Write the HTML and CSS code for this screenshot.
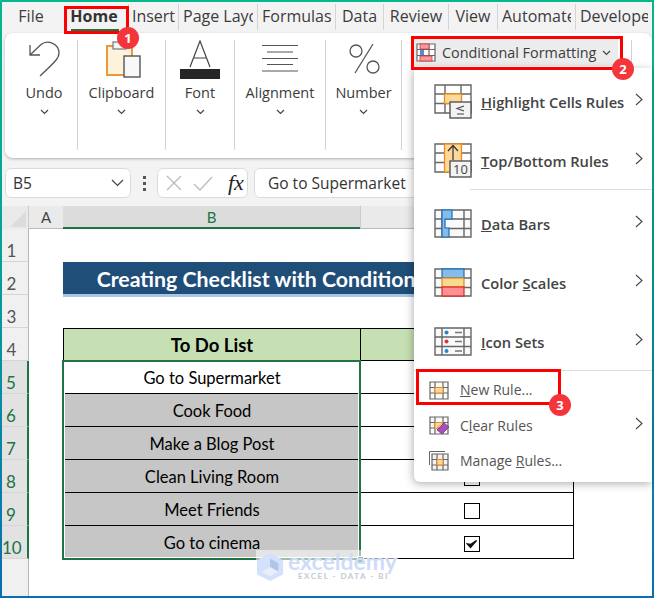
FILE: index.html
```html
<!DOCTYPE html>
<html lang="en">
<head>
<meta charset="utf-8">
<title>Conditional Formatting</title>
<link rel="stylesheet" href="styles.css">
</head>
<body>
<div class="frame">
  <div class="inner">
    <nav class="tabs">
      <div class="tab plain"><span>File</span></div>
      <div class="tab active"><span>Home</span></div>
      <div class="tab tight"><span>Insert</span></div>
      <div class="tab"><span>Page Layout</span></div>
      <div class="tab"><span>Formulas</span></div>
      <div class="tab"><span>Data</span></div>
      <div class="tab"><span>Review</span></div>
      <div class="tab"><span>View</span></div>
      <div class="tab"><span>Automate</span></div>
      <div class="tab plain"><span>Developer</span></div>
    </nav>

    <section class="ribbon">
      <div class="group undo">
        <div class="gicon"><svg width="34" height="40" viewBox="0 0 34 40"><path d="M3 5V15H13M3 15L14 4.500C21 -1 32 4 32 13C32 18 29 21 13 36" fill="none" stroke="#555" stroke-width="1.300"/></svg></div>
        <div class="glabel">Undo</div><svg class="chev" width="9" height="6" viewBox="0 0 9 6"><path d="M1 1L4.500 4.500L8 1" fill="none" stroke="#444" stroke-width="1.200"/></svg>
      </div>
      <div class="group">
        <div class="gicon clip"><svg width="36" height="40" viewBox="0 0 36 40"><rect x="2" y="6" width="25" height="29" fill="#fdf3dc" stroke="#eb9b36" stroke-width="2"/><rect x="8" y="2" width="13" height="7" fill="#f5f5f5" stroke="#777" stroke-width="1.200"/><rect x="19" y="16" width="16" height="21" fill="#f8f8f8" stroke="#555" stroke-width="1.400"/></svg></div>
        <div class="glabel">Clipboard</div><svg class="chev" width="9" height="6" viewBox="0 0 9 6"><path d="M1 1L4.500 4.500L8 1" fill="none" stroke="#444" stroke-width="1.200"/></svg>
      </div>
      <div class="group">
        <div class="gicon"><svg width="40" height="40" viewBox="0 0 40 40"><path d="M10 27L20 1L30 27M13.500 18H26.500" fill="none" stroke="#444" stroke-width="1.200"/><rect y="29" width="40" height="10" fill="#262626"/></svg></div>
        <div class="glabel">Font</div><svg class="chev" width="9" height="6" viewBox="0 0 9 6"><path d="M1 1L4.500 4.500L8 1" fill="none" stroke="#444" stroke-width="1.200"/></svg>
      </div>
      <div class="group">
        <div class="gicon"><svg width="36" height="40" viewBox="0 0 36 40"><path d="M0 5.500H36M5 12H31M0 18.500H36M5 24.500H31M0 31H36" fill="none" stroke="#555" stroke-width="1.200"/></svg></div>
        <div class="glabel">Alignment</div><svg class="chev" width="9" height="6" viewBox="0 0 9 6"><path d="M1 1L4.500 4.500L8 1" fill="none" stroke="#444" stroke-width="1.200"/></svg>
      </div>
      <div class="group">
        <div class="gicon"><svg width="32" height="40" viewBox="0 0 32 40"><circle cx="8" cy="11" r="6" fill="none" stroke="#555" stroke-width="1.300"/><circle cx="25" cy="27" r="6" fill="none" stroke="#555" stroke-width="1.300"/><path d="M25 4L7 33" stroke="#555" stroke-width="1.300"/></svg></div>
        <div class="glabel">Number</div><svg class="chev" width="9" height="6" viewBox="0 0 9 6"><path d="M1 1L4.500 4.500L8 1" fill="none" stroke="#444" stroke-width="1.200"/></svg>
      </div>
      <div class="styles">
        <button class="cf">
          <svg width="20" height="19" viewBox="0 0 20 19"><path d="M1 1H19V18H1ZM1 6.500H19M1 12.500H19M7 1V18M13 1V18" fill="#fff" stroke="#666" stroke-width="1.200"/><rect x="4" y="1" width="9" height="5" fill="#f59aa0" stroke="#d33" stroke-width=".8"/><rect x="4" y="7" width="4" height="5" fill="#4a90d9"/><rect x="4" y="13" width="12" height="5" fill="#f59aa0" stroke="#d33" stroke-width=".8"/></svg>
          <span>Conditional Formatting</span>
          <svg width="9" height="6" viewBox="0 0 9 6"><path d="M1 1L4.500 4.500L8 1" fill="none" stroke="#444" stroke-width="1.200"/></svg>
        </button>
      </div>
      <div class="edge"></div>
    </section>

    <section class="fbar">
      <div class="namebox"><span>B5</span><svg width="13" height="8" viewBox="0 0 13 8"><path d="M1 1L6.500 6.500L12 1" fill="none" stroke="#444" stroke-width="1.200"/></svg></div>
      <div class="dots"><i></i><i></i><i></i></div>
      <div class="fxbox">
        <svg width="16" height="16" viewBox="0 0 16 16"><path d="M1 1L15 15M15 1L1 15" stroke="#bbb" stroke-width="1.300"/></svg>
        <svg width="20" height="15" viewBox="0 0 20 15"><path d="M1 8L7 14L19 1" fill="none" stroke="#bbb" stroke-width="1.300"/></svg>
        <span class="fx">fx</span>
      </div>
      <div class="input">Go to Supermarket</div>
    </section>

    <section class="sheet">
      <div class="row head">
        <div class="corner"><svg width="16" height="16" viewBox="0 0 16 16"><path d="M16 0V16H0Z" fill="#dcdcdc"/></svg></div>
        <div class="colh a">A</div>
        <div class="colh b">B</div>
        <div class="colh c"></div>
      </div>
      <div class="row"><div class="rh">1</div></div>
      <div class="row"><div class="rh">2</div><div class="sp"></div><div class="title">Creating Checklist with Conditional Formatting</div></div>
      <div class="row"><div class="rh">3</div></div>
      <div class="row"><div class="rh">4</div><div class="sp"></div><div class="cell thead">To Do List</div><div class="cell ctd thead"></div></div>
      <div class="row"><div class="rh sel">5</div><div class="sp"></div><div class="cell">Go to Supermarket</div><div class="cell ctd"></div></div>
      <div class="row"><div class="rh sel">6</div><div class="sp"></div><div class="cell gray">Cook Food</div><div class="cell ctd"></div></div>
      <div class="row"><div class="rh sel">7</div><div class="sp"></div><div class="cell gray">Make a Blog Post</div><div class="cell ctd"></div></div>
      <div class="row"><div class="rh sel">8</div><div class="sp"></div><div class="cell gray">Clean Living Room</div><div class="cell ctd"><b class="box"></b></div></div>
      <div class="row"><div class="rh sel">9</div><div class="sp"></div><div class="cell gray">Meet Friends</div><div class="cell ctd"><b class="box"></b></div></div>
      <div class="row"><div class="rh sel">10</div><div class="sp"></div><div class="cell gray">Go to cinema</div><div class="cell ctd"><b class="box"><svg width="12" height="10" viewBox="0 0 12 10"><path d="M1.500 5L4.500 8.500L10.500 1.500L4.500 5.500Z" fill="#111" stroke="#111" stroke-width="1.400"/></svg></b></div></div>
      <div class="rest"><div class="rh"></div></div>
    </section>
  </div>

  <div class="selection"><span class="handle"></span></div>

  <div class="mark">
    <svg width="28" height="32" viewBox="0 0 30 32"><path d="M15 1L29 9V24L15 31L1 24V9Z" fill="#d5e0fa"/><path d="M15 7L24 12V21L15 16Z" fill="#b3c4ec"/><path d="M15 16L6 21L15 26L24 21Z" fill="#e8eefc"/></svg>
    <div class="marktext"><strong>exceldemy</strong><small>EXCEL - DATA - BI</small></div>
  </div>

  <div class="menu">
    <div class="mi big"><svg width="38" height="35" viewBox="0 0 38 35"><path d="M1 1H37V29H1ZM1 10H37M1 19.500H37M11 1V29M27 1V29" fill="#fff" stroke="#666" stroke-width="1.400"/><rect x="10.500" y="10" width="17" height="9.500" fill="#fcd89a" stroke="#ed8b1e" stroke-width="1.300"/><rect x="16" y="18" width="21" height="16" fill="#f3f3f3" stroke="#555" stroke-width="1.400"/><path d="M30 22L23 24.500L30 27M23 30H30" fill="none" stroke="#444" stroke-width="1.100"/></svg><span><u>H</u>ighlight Cells Rules</span><svg class="arr" width="8" height="13" viewBox="0 0 8 13"><path d="M1 1L7 6.500L1 12" fill="none" stroke="#444" stroke-width="1.100"/></svg></div>
    <div class="mi big"><svg width="38" height="35" viewBox="0 0 38 35"><path d="M1 1H37V29H1ZM1 10H37M1 19.500H37M11 1V29M27 1V29" fill="#fff" stroke="#666" stroke-width="1.400"/><rect x="10.500" y="1" width="17" height="28" fill="#fcd89a" stroke="#ed8b1e" stroke-width="1.300"/><path d="M19 17V3M14 8L19 2.500L24 8" fill="none" stroke="#333" stroke-width="1.200"/><rect x="16" y="18" width="21" height="16" fill="#f3f3f3" stroke="#555" stroke-width="1.400"/><text x="26.500" y="31" text-anchor="middle" class="ten">10</text></svg><span><u>T</u>op/Bottom Rules</span><svg class="arr" width="8" height="13" viewBox="0 0 8 13"><path d="M1 1L7 6.500L1 12" fill="none" stroke="#444" stroke-width="1.100"/></svg></div>
    <div class="msep first"></div>
    <div class="mi big"><svg width="38" height="35" viewBox="0 0 38 35"><path d="M1 4H37V31H1ZM1 13H37M1 22.500H37M8 4V31M30 4V31" fill="#fafafa" stroke="#666" stroke-width="1.400"/><path d="M8 4H18V13H11V22H15V31H8Z" fill="#85bcec" stroke="#1b6fbb" stroke-width="1.200"/></svg><span><u>D</u>ata Bars</span><svg class="arr" width="8" height="13" viewBox="0 0 8 13"><path d="M1 1L7 6.500L1 12" fill="none" stroke="#444" stroke-width="1.100"/></svg></div>
    <div class="mi big"><svg width="38" height="35" viewBox="0 0 38 35"><path d="M1 4H37V31H1ZM1 13H37M1 22.500H37" fill="#fafafa" stroke="#666" stroke-width="1.400"/><rect x="8" y="4" width="22" height="9" fill="#85bcec" stroke="#1b6fbb" stroke-width="1.200"/><rect x="8" y="13" width="22" height="9" fill="#fbd98f" stroke="#dd8a1a" stroke-width="1.200"/><rect x="8" y="22" width="22" height="9" fill="#ff8f95" stroke="#d8281e" stroke-width="1.200"/></svg><span>Color <u>S</u>cales</span><svg class="arr" width="8" height="13" viewBox="0 0 8 13"><path d="M1 1L7 6.500L1 12" fill="none" stroke="#444" stroke-width="1.100"/></svg></div>
    <div class="mi big"><svg width="38" height="35" viewBox="0 0 38 35"><path d="M1 4H37V31H1ZM1 13H37M1 22.500H37M8 4V31M30 4V31" fill="#fafafa" stroke="#666" stroke-width="1.400"/><circle cx="12.500" cy="8.500" r="2" fill="#1b87d8"/><circle cx="12.500" cy="17.500" r="2" fill="#e8303a"/><circle cx="12.500" cy="27" r="2" fill="#1b87d8"/><path d="M21 8.500H28M21 17.500H28M21 27H28" stroke="#777" stroke-width="1.400"/></svg><span><u>I</u>con Sets</span><svg class="arr" width="8" height="13" viewBox="0 0 8 13"><path d="M1 1L7 6.500L1 12" fill="none" stroke="#444" stroke-width="1.100"/></svg></div>
    <div class="msep"></div>
    <div class="mi small"><svg width="20" height="20" viewBox="0 0 20 20"><path d="M1 2H19V19H1ZM1 7.500H19M1 13H19M6 2V19M14 2V19" fill="#fafafa" stroke="#666" stroke-width="1.200"/><rect x="6" y="7.500" width="8" height="5.500" fill="#fcd89a" stroke="#ed8b1e"/></svg><span><u>N</u>ew Rule...</span></div>
    <div class="mi small"><svg width="20" height="20" viewBox="0 0 20 20"><path d="M1 2H19V19H1ZM1 7.500H19M1 13H19M6 2V19M14 2V19" fill="#fafafa" stroke="#666" stroke-width="1.200"/><path d="M6 7.500H14L6 15Z" fill="#fcd89a" stroke="#ed8b1e"/><path d="M8 15L15 8L20 12L13 19Z" fill="#a652b5" stroke="#7d2f90" stroke-width=".8"/></svg><span>C<u>l</u>ear Rules</span><svg class="arr" width="8" height="13" viewBox="0 0 8 13"><path d="M1 1L7 6.500L1 12" fill="none" stroke="#444" stroke-width="1.100"/></svg></div>
    <div class="mi small"><svg width="20" height="20" viewBox="0 0 20 20"><path d="M0.500 14V0.500H16" fill="none" stroke="#666"/><path d="M3 3H19V19H3ZM3 8.500H19M3 14H19M8 3V19M14 3V19" fill="#f3f3f3" stroke="#666" stroke-width="1.200"/><rect x="8" y="8.500" width="6" height="5.500" fill="#fcd89a" stroke="#ed8b1e"/></svg><span>Manage <u>R</u>ules...</span></div>
  </div>

  <div class="callout home"></div>
  <div class="callout cfbox"></div>
  <div class="callout newrule"></div>
  <div class="badge one">1</div>
  <div class="badge two">2</div>
  <div class="badge three">3</div>
</div>
</body>
</html>
```

FILE: styles.css
```css
* { box-sizing: border-box; }
html, body { margin: 0; padding: 0; }
body { width: 654px; height: 598px; overflow: hidden; font-family: "Open Sans", "Liberation Sans", sans-serif; color: #333; }
.frame { position: relative; width: 654px; height: 598px; padding: 2px; overflow: hidden; background: linear-gradient(180deg, #06b68c 0%, #05a496 40%, #0a6eb2 100%); }
.inner { height: 594px; background: #f3f3f3; display: flex; flex-direction: column; overflow: hidden; }

.tabs { display: grid; grid-template-columns: 58px 69px 50px 79px 78px 48px 65px 49px 78px 76px; height: 31px; flex: none; padding-top: 2px; }
.tab { font-size: 16px; height: 26px; line-height: 25px; padding: 0 4px; border-right: 1px solid #d4d4d4; text-align: center; color: #3c3c3c; }
.tab span { display: block; overflow: hidden; white-space: nowrap; }
.tab.plain { border-right: 0; }
.tab.tight { padding: 0 1px; }
.tab.active { font-weight: 700; color: #333; position: relative; }
.tab.active::after { content: ""; position: absolute; left: 11px; right: 9px; bottom: -2px; height: 3px; background: #217346; }

.ribbon { flex: none; height: 125px; margin-left: 3px; background: #fff; border-radius: 8px; box-shadow: 0 1px 3px rgba(0,0,0,.28); display: grid; grid-template-columns: 73px 88px 69px 91px 76px 230px 1fr; padding-top: 7px; }
.group { height: 110px; border-right: 1px solid #d2d2d2; display: flex; flex-direction: column; align-items: center; }
.group.undo { padding-left: 6px; }
.gicon { height: 41px; display: flex; align-items: flex-start; justify-content: center; }
.gicon.clip { padding-left: 3px; }
.glabel { font-size: 14.500px; line-height: 20px; margin-top: 2px; color: #3c3c3c; }
.chev { margin-top: 6px; }
.styles { border-right: 1px solid #d2d2d2; height: 110px; padding-left: 10px; }
.cf { width: 206px; height: 28px; margin-top: -2px; padding: 1px 0 0 4px; border: 0; border-radius: 3px; background: #ececec; display: flex; align-items: center; gap: 6px; font: 14.400px "Open Sans", sans-serif; color: #3c3c3c; }
.edge { border-left: 0; }

.fbar { flex: none; margin-top: 10px; height: 30px; display: flex; padding-left: 3px; }
.namebox, .fxbox, .input { background: #fff; border: 1px solid #dcdcdc; border-radius: 6px; height: 30px; display: flex; align-items: center; font-size: 15.500px; color: #333; }
.namebox { width: 126px; padding: 0 6px 0 7px; justify-content: space-between; }
.dots { width: 26px; display: flex; flex-direction: column; align-items: center; justify-content: center; gap: 3px; }
.dots i { width: 3px; height: 3px; background: #555; display: block; }
.fxbox { width: 91px; padding-left: 8px; gap: 11px; }
.fx { font: italic 400 22px "Liberation Serif", serif; color: #222; margin-left: 4px; }
.input { flex: 1; margin-left: 6px; padding-left: 13px; border-radius: 6px 0 0 6px; }

.sheet { flex: 1; margin-top: 8px; background: #fff; font-family: Lato, "Liberation Sans", sans-serif; overflow: hidden; }
.row { display: flex; height: 33px; }
.row.head { height: 23px; background: #eaeaea; }
.corner { width: 27px; display: flex; align-items: flex-end; justify-content: flex-end; padding: 0 2px 2px 0; border-right: 1px solid #ccc; }
.colh { font-size: 15px; line-height: 22px; text-align: center; color: #444; }
.colh.a { width: 34px; border-bottom: 1px solid #bbb; }
.colh.b { width: 297px; background: #dcdcdc; color: #217346; border-bottom: 2px solid #217346; }
.colh.c { flex: 1; border-left: 1px solid #ccc; border-bottom: 1px solid #bbb; }
.rh { width: 27px; height: 100%; background: #f0f0f0; border-right: 1px solid #b5b5b5; border-bottom: 1px solid #d5d5d5; font-size: 17px; line-height: 20px; padding: 12px 7px 0 0; text-align: center; color: #555; flex: none; }
.rh.sel { background: #e2e2e2; color: #217346; border-right: 2px solid #217346; }
.sp { width: 34px; flex: none; }
.title { width: 511px; height: 35px; background: #1f4e78; border-bottom: 3px solid #a9c5e3; color: #fff; font-weight: 700; font-size: 21.300px; line-height: 34px; text-align: center; white-space: nowrap; flex: none; }
.cell { width: 297px; flex: none; border-left: 1px solid #000; border-bottom: 1px solid #000; font-size: 16.500px; line-height: 34px; text-align: center; color: #000; }
.cell.ctd { width: 214px; border-right: 1px solid #000; display: flex; align-items: center; justify-content: center; }
.thead { background: #c6e0b4; border-top: 1px solid #000; font-weight: 700; font-size: 18.500px; line-height: 33px; }
.gray { background: #c6c6c6; }
.box { width: 16px; height: 16px; border: 1px solid #000; background: #fff; display: flex; align-items: center; justify-content: center; margin-left: 10px; margin-top: 3px; }
.rest { height: 60px; }

.selection { position: absolute; left: 62px; top: 360px; width: 299px; height: 200px; border: 2px solid #217346; box-shadow: inset 0 0 0 1px #fff; }
.handle { position: absolute; right: -5px; bottom: -5px; width: 7px; height: 7px; background: #217346; border: 1px solid #fff; }

.mark { position: absolute; left: 256px; top: 550px; width: 142px; height: 33px; display: flex; align-items: center; gap: 4px; background: rgba(255,255,255,.55); }
.marktext { display: flex; flex-direction: column; font-family: Lato, sans-serif; line-height: 1; margin-top: -3px; }
.marktext strong { font-size: 23px; color: #cfdcf8; line-height: 20px; }
.marktext small { font-size: 8px; letter-spacing: 1.500px; color: #c4c9d4; font-weight: 700; margin-top: 1px; white-space: nowrap; padding-left: 10px; }

.menu { position: absolute; left: 414px; top: 68px; width: 238px; height: 414px; padding-top: 4px; background: #fff; border-radius: 0 0 0 6px; box-shadow: -1px 2px 8px rgba(0,0,0,.3); color: #444; }
.mi { display: flex; align-items: center; padding-right: 9px; }
.mi .arr { margin-left: auto; margin-top: -4px; }
.big { height: 59px; padding-left: 20px; gap: 9px; font-size: 14.700px; font-weight: 600; }
.small { height: 35.500px; padding-left: 15px; gap: 11px; font-size: 14px; color: #555; }
.msep { height: 1px; margin: -1px 0 1px; background: #ddd; }
.msep.first { margin: -1px 0 4px 56px; }
.ten { font: 13px "Open Sans", sans-serif; fill: #444; }

.callout { position: absolute; border: 3px solid #f00; }
.home { left: 64px; top: 6px; width: 65px; height: 28px; }
.cfbox { left: 411px; top: 36px; width: 212px; height: 34px; }
.newrule { left: 416px; top: 369px; width: 145px; height: 36px; }
.badge { position: absolute; width: 22px; height: 22px; border-radius: 50%; background: #f4363c; color: #fff; font: 700 13px/22px "Open Sans", sans-serif; text-align: center; }
.one { left: 117px; top: 27px; }
.two { left: 612px; top: 58px; }
.three { left: 549px; top: 394px; }
```
